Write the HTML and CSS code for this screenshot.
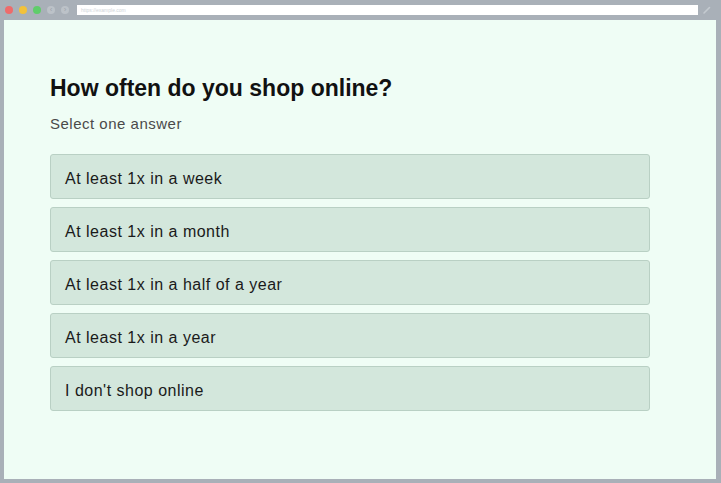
FILE: index.html
```html
<!DOCTYPE html>
<html lang="en">
<head>
    <meta charset="UTF-8">
    <meta name="viewport" content="width=device-width, initial-scale=1.0">
    <title>How often do you shop online?</title>
    <link rel="stylesheet" href="styles.css">
</head>
<body>
    <div class="janela">
        <div class="barra">
            <div class="botoes">
                <span class="bola vermelha"></span>
                <span class="bola amarela"></span>
                <span class="bola verde"></span>
                <span class="seta">&#8249;</span>
                <span class="seta">&#8250;</span>
            </div>
            <div class="endereco">https://example.com</div>
            <div class="editar">
                <svg width="10" height="10" viewBox="0 0 10 10"><path d="M2 8 L7.5 2.5" stroke="#c4cad0" stroke-width="1.6" stroke-linecap="round"/></svg>
            </div>
        </div>

        <div class="conteudo">
            <h2>How often do you shop online?</h2>
            <p class="subtitulo">Select one answer</p>

            <!-- Lista de respostas -->
            <div class="opcoes">
                <div class="opcao">At least 1x in a week</div>
                <div class="opcao">At least 1x in a month</div>
                <div class="opcao">At least 1x in a half of a year</div>
                <div class="opcao">At least 1x in a year</div>
                <div class="opcao">I don't shop online</div>
            </div>
        </div>
    </div>
</body>
</html>
```

FILE: styles.css
```css
* {
    margin: 0;
    padding: 0;
    box-sizing: border-box;
}

body {
    background-color: #a9b0b8;
    font-family: "Liberation Sans", Arial, sans-serif;
}

.janela {
    width: 721px;
    height: 483px;
    display: flex;
    flex-direction: column;
    padding: 0 5px 4px 4px;
}

.barra {
    height: 20px;
    display: flex;
    align-items: center;
}

.botoes {
    display: flex;
    align-items: center;
    width: 73px;
    padding-left: 1px;
}

.bola {
    width: 8px;
    height: 8px;
    border-radius: 50%;
    margin-right: 6px;
}

.vermelha { background-color: #ee6b6b; }
.amarela { background-color: #f2c23a; }
.verde { background-color: #5fcd6a; }

.seta {
    width: 8px;
    height: 8px;
    border-radius: 50%;
    background-color: #bcc2c8;
    color: #9ea5ac;
    font-size: 8px;
    line-height: 8px;
    text-align: center;
    margin-right: 6px;
}

.endereco {
    flex: 1;
    height: 10px;
    background-color: #ffffff;
    font-size: 5px;
    line-height: 10px;
    color: #d0d4d8;
    padding-left: 4px;
}

.editar {
    width: 18px;
    height: 10px;
    display: flex;
    align-items: center;
    justify-content: center;
}

.conteudo {
    flex: 1;
    background-color: #effdf5;
    padding: 53px 66px 0 46px;
}

h2 {
    font-size: 23px;
    font-weight: bold;
    color: #111111;
    line-height: 30px;
}

.subtitulo {
    font-size: 15px;
    color: #4a4a4a;
    margin-top: 12px;
    letter-spacing: 0.5px;
}

.opcoes {
    display: flex;
    flex-direction: column;
    gap: 8px;
    margin-top: 22px;
}

.opcao {
    height: 45px;
    display: flex;
    align-items: center;
    padding-left: 14px;
    padding-top: 4px;
    background-color: #d3e7dc;
    border: 1px solid #b9d0c4;
    border-radius: 3px;
    font-size: 16px;
    letter-spacing: 0.5px;
    color: #1a1a1a;
}
```
